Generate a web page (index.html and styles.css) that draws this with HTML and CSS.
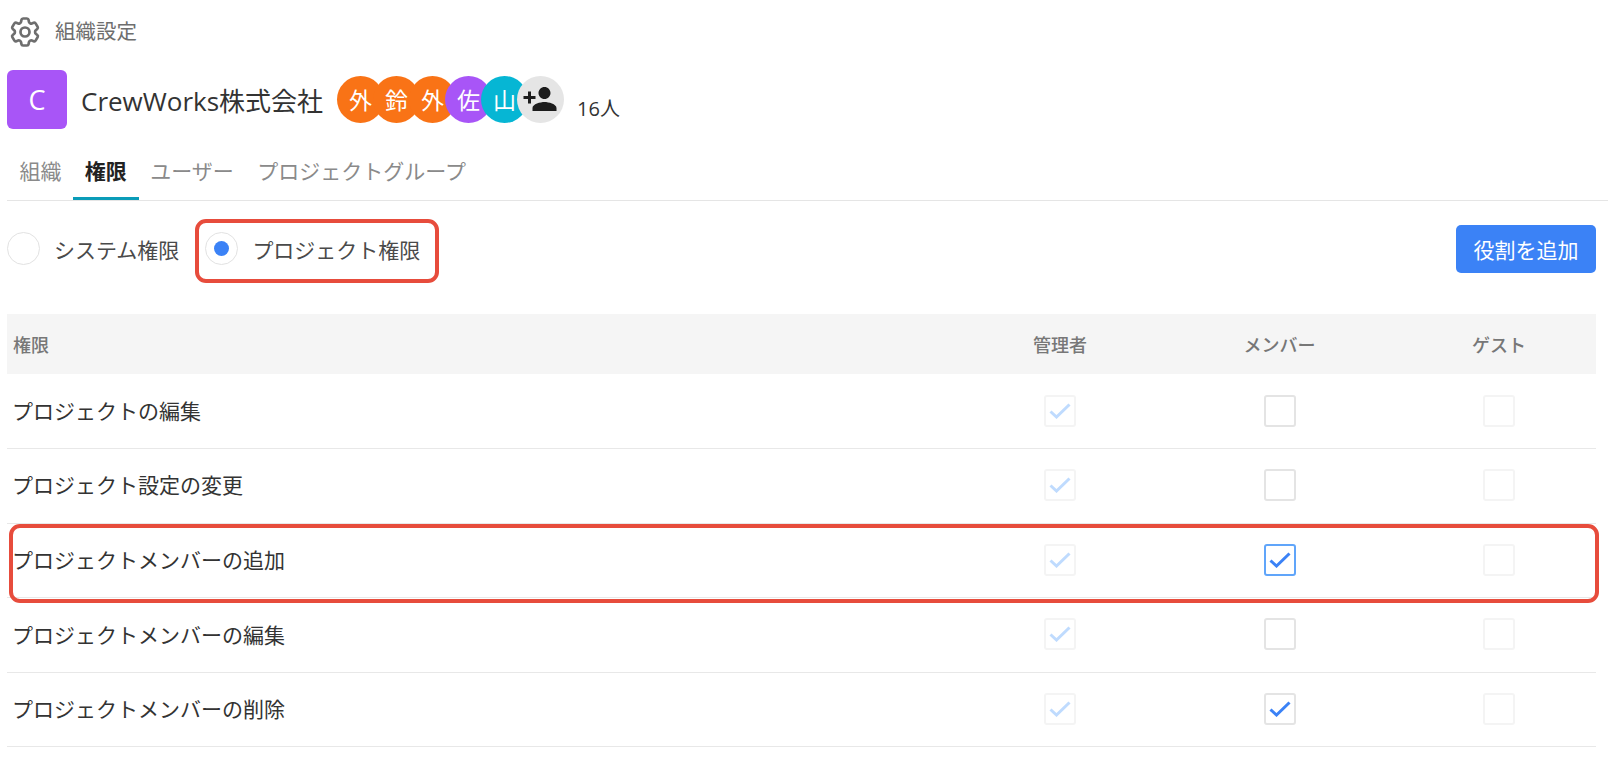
FILE: index.html
```html
<!DOCTYPE html>
<html lang="ja">
  <head>
    <meta charset="UTF-8" />
    <title>組織設定</title>
    <link rel="stylesheet" href="styles.css">
  </head>
  <body>
    <svg class="defs" aria-hidden="true">
      <symbol id="tick" viewBox="0 0 22 16">
        <path d="M1.5 8.5 L7.5 14 L20.5 1.5" fill="none" stroke="currentColor" stroke-width="3" />
      </symbol>
    </svg>

    <div class="page-title">
      <svg class="gear" viewBox="0 0 24 24" fill="none" stroke="currentColor" stroke-width="1.8">
        <path stroke-linecap="round" stroke-linejoin="round" d="M9.594 3.94c.09-.542.56-.94 1.11-.94h2.593c.55 0 1.02.398 1.11.94l.213 1.281c.063.374.313.686.645.87.074.04.147.083.22.127.325.196.72.257 1.075.124l1.217-.456a1.125 1.125 0 0 1 1.37.49l1.296 2.247a1.125 1.125 0 0 1-.26 1.431l-1.003.827c-.293.241-.438.613-.43.992a7.723 7.723 0 0 1 0 .255c-.008.378.137.75.43.991l1.004.827c.424.35.534.955.26 1.43l-1.298 2.247a1.125 1.125 0 0 1-1.369.491l-1.217-.456c-.355-.133-.75-.072-1.076.124a6.47 6.47 0 0 1-.22.128c-.331.183-.581.495-.644.869l-.213 1.281c-.09.543-.56.94-1.11.94h-2.594c-.55 0-1.019-.398-1.11-.94l-.213-1.281c-.062-.374-.312-.686-.644-.87a6.52 6.52 0 0 1-.22-.127c-.325-.196-.72-.257-1.076-.124l-1.217.456a1.125 1.125 0 0 1-1.369-.49l-1.297-2.247a1.125 1.125 0 0 1 .26-1.431l1.004-.827c.292-.24.437-.613.43-.991a6.932 6.932 0 0 1 0-.255c.007-.38-.138-.751-.43-.992l-1.004-.827a1.125 1.125 0 0 1-.26-1.43l1.297-2.247a1.125 1.125 0 0 1 1.37-.491l1.216.456c.356.133.751.072 1.076-.124.072-.044.146-.086.22-.128.332-.183.582-.495.644-.869l.214-1.28Z" />
        <circle cx="12" cy="12" r="3" />
      </svg>
      <span class="page-title-text">組織設定</span>
    </div>

    <div class="org">
      <div class="org-logo">C</div>
      <div class="org-name">CrewWorks株式会社</div>
      <div class="avatars">
        <span class="avatar orange">外</span>
        <span class="avatar orange">鈴</span>
        <span class="avatar orange">外</span>
        <span class="avatar purple">佐</span>
        <span class="avatar cyan">山</span>
        <span class="avatar add">
          <svg viewBox="0 0 24 24" fill="currentColor">
            <path d="M15 12c2.21 0 4-1.79 4-4s-1.79-4-4-4-4 1.79-4 4 1.79 4 4 4zm-9-2V7H4v3H1v2h3v3h2v-3h3v-2H6zm9 4c-2.67 0-8 1.34-8 4v2h16v-2c0-2.66-5.33-4-8-4z" />
          </svg>
        </span>
      </div>
      <div class="org-count">16人</div>
    </div>

    <div class="tabs">
      <div class="tab">組織</div>
      <div class="tab active">権限</div>
      <div class="tab">ユーザー</div>
      <div class="tab">プロジェクトグループ</div>
    </div>

    <div class="toolbar">
      <div class="radios">
        <label class="radio"><span class="radio-dot"></span>システム権限</label>
        <label class="radio selected">
          <span class="radio-dot"></span>プロジェクト権限
          <span class="callout callout-radio"></span>
        </label>
      </div>
      <button class="add-role">役割を追加</button>
    </div>

    <div class="perm-table">
      <div class="perm-row perm-head">
        <div class="perm-name">権限</div>
        <div class="perm-col">管理者</div>
        <div class="perm-col">メンバー</div>
        <div class="perm-col">ゲスト</div>
      </div>

      <div class="perm-row">
        <div class="perm-name">プロジェクトの編集</div>
        <div class="perm-col"><span class="check off"><svg><use href="#tick" /></svg></span></div>
        <div class="perm-col"><span class="check"></span></div>
        <div class="perm-col"><span class="check off"></span></div>
      </div>

      <div class="perm-row">
        <div class="perm-name">プロジェクト設定の変更</div>
        <div class="perm-col"><span class="check off"><svg><use href="#tick" /></svg></span></div>
        <div class="perm-col"><span class="check"></span></div>
        <div class="perm-col"><span class="check off"></span></div>
      </div>

      <div class="perm-row">
        <div class="perm-name">プロジェクトメンバーの追加</div>
        <div class="perm-col"><span class="check off"><svg><use href="#tick" /></svg></span></div>
        <div class="perm-col"><span class="check focus"><svg><use href="#tick" /></svg></span></div>
        <div class="perm-col"><span class="check off"></span></div>
        <span class="callout callout-row"></span>
      </div>

      <div class="perm-row">
        <div class="perm-name">プロジェクトメンバーの編集</div>
        <div class="perm-col"><span class="check off"><svg><use href="#tick" /></svg></span></div>
        <div class="perm-col"><span class="check"></span></div>
        <div class="perm-col"><span class="check off"></span></div>
      </div>

      <div class="perm-row">
        <div class="perm-name">プロジェクトメンバーの削除</div>
        <div class="perm-col"><span class="check off"><svg><use href="#tick" /></svg></span></div>
        <div class="perm-col"><span class="check"><svg><use href="#tick" /></svg></span></div>
        <div class="perm-col"><span class="check off"></span></div>
      </div>
    </div>
  </body>
</html>
```

FILE: styles.css
```css
/* Base */
body {
  margin: 0;
  padding: 16px 21px 0 7px;
  background: #ffffff;
  color: #333333;
  font-family: "Open Sans", "Noto Sans CJK JP", sans-serif;
  font-size: 21px;
  overflow: hidden;
}

.defs {
  display: none;
}

/* Page title */
.page-title {
  display: flex;
  align-items: center;
  gap: 16px;
  height: 31px;
  padding-left: 2px;
  color: #6e6e6e;
  font-size: 20.5px;
}

.page-title-text {
  margin-top: -3px;
}

.gear {
  width: 36px;
  height: 36px;
  margin: 0 -4px 0 -2px;
}

/* Organisation header */
.org {
  display: flex;
  align-items: center;
  height: 59px;
  margin-top: 23px;
}

.org-logo {
  display: flex;
  align-items: center;
  justify-content: center;
  width: 60px;
  height: 59px;
  border-radius: 6px;
  background: #a855f7;
  color: #ffffff;
  font-size: 27px;
}

.org-name {
  margin-left: 14px;
  color: #333333;
  font-size: 26px;
  white-space: nowrap;
}

.avatars {
  display: flex;
  margin-left: 14px;
  margin-top: -1px;
}

.avatar {
  display: flex;
  align-items: center;
  justify-content: center;
  width: 47px;
  height: 47px;
  border-radius: 50%;
  color: #ffffff;
  font-size: 23px;
}

.avatar + .avatar {
  margin-left: -11px;
}

.orange {
  background: #f97316;
}

.purple {
  background: #a855f7;
}

.cyan {
  background: #06b6d4;
}

.add {
  background: #e5e5e5;
  color: #1c1c1c;
}

.add svg {
  width: 36px;
  height: 36px;
  margin-left: -2px;
}

.org-count {
  margin: 16px 0 0 13px;
  font-size: 20px;
}

/* Tabs */
.tabs {
  display: flex;
  height: 54px;
  margin-top: 17px;
  margin-right: -12px;
  padding-left: 0.8px;
  border-bottom: 1.5px solid #e5e5e5;
}

.tab {
  height: 54px;
  box-sizing: border-box;
  padding: 10px 11.7px 0;
  color: #8a8a8a;
  line-height: 30px;
}

.tab.active {
  border-bottom: 3px solid #0a9cb8;
  color: #222222;
  font-weight: 700;
}

/* Radios and add button */
.toolbar {
  display: flex;
  align-items: center;
  justify-content: space-between;
  height: 48px;
  margin-top: 24px;
}

.radios {
  display: flex;
  gap: 26px;
  margin-top: -1px;
}

.radio {
  position: relative;
  display: flex;
  align-items: center;
  gap: 14px;
  height: 33px;
  color: #4a4a4a;
}

.radio-dot {
  display: flex;
  align-items: center;
  justify-content: center;
  box-sizing: border-box;
  width: 33px;
  height: 33px;
  border: 1.5px solid #e2e2e2;
  border-radius: 50%;
}

.radio.selected .radio-dot::after {
  content: "";
  width: 15px;
  height: 15px;
  border-radius: 50%;
  background: #3b82f6;
}

.add-role {
  width: 140px;
  height: 48px;
  border: none;
  border-radius: 5px;
  background: #3b82f6;
  color: #ffffff;
  font-family: inherit;
  font-size: 21px;
}

/* Permission table */
.perm-table {
  margin-top: 41px;
}

.perm-row {
  position: relative;
  display: grid;
  grid-template-columns: 1fr 194px 245px 194px;
  align-items: center;
  box-sizing: border-box;
  height: 74.6px;
  padding-left: 5px;
  border-bottom: 1.5px solid #e8e8e8;
}

.perm-name {
  padding-bottom: 3px;
}

.perm-head {
  height: 60px;
  margin-bottom: 0.5px;
  padding-left: 6px;
  border-bottom: none;
  background: #f5f5f5;
  color: #777777;
  font-size: 18px;
  font-weight: 500;
}

.perm-head .perm-name {
  padding-bottom: 0;
}

.perm-col {
  display: flex;
  justify-content: center;
}

.check {
  display: flex;
  align-items: center;
  justify-content: center;
  box-sizing: border-box;
  width: 32px;
  height: 32px;
  margin-top: -1.5px;
  border: 2px solid #e4e4e4;
  border-radius: 3px;
  color: #3b82f6;
}

.check svg {
  width: 22px;
  height: 16px;
}

.check.off {
  border-color: #f4f4f4;
  color: #bfdbfe;
}

.check.focus {
  border-color: #60a5fa;
}

/* Red annotation boxes */
.callout {
  position: absolute;
  box-sizing: border-box;
  border: 4px solid #e74c3c;
  border-radius: 11px;
}

.callout-radio {
  top: -13px;
  right: -19px;
  bottom: -18px;
  left: -10px;
}

.callout-row {
  top: 0;
  right: -2.5px;
  bottom: -6px;
  left: 1.5px;
}
```
